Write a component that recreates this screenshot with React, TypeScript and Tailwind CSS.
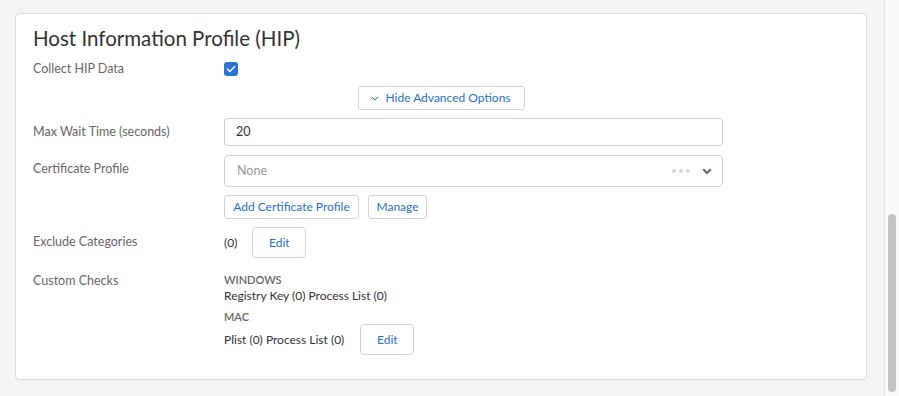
import React from 'react';

const labelCls = 'w-[191px] shrink-0 text-[12.5px] text-[#666]';
const btnCls =
  'h-[24px] rounded-[3px] border border-[#d4d4d4] bg-white text-[12px] text-[#1f6fd1] leading-none whitespace-nowrap';

function Checkbox() {
  return (
    <div className="w-[14px] h-[14px] rounded-[3px] bg-[#2b73d3] flex items-center justify-center">
      <svg width="10" height="8" viewBox="0 0 10 8" fill="none">
        <path d="M1.3 4.1 L3.8 6.5 L8.7 1.4" stroke="white" strokeWidth="1.4" strokeLinecap="round" strokeLinejoin="round" />
      </svg>
    </div>
  );
}

export default function App() {
  return (
    <div className="flex h-[396px] w-[899px] overflow-hidden" style={{ fontFamily: 'Lato, "Open Sans", sans-serif' }}>
      <div className="flex-1 bg-[#f3f4f4] pl-[15px] pt-[13px]">
        <div className="w-[852px] h-[367px] bg-white border border-[#dadada] rounded-[4px] px-[17px] pt-[11px]">
          <h2 className="h-[26px] leading-[26px] text-[20.5px] text-[#333]">Host Information Profile (HIP)</h2>

          <div className="mt-[8px] h-[20px] flex items-center">
            <div className={labelCls}>Collect HIP Data</div>
            <Checkbox />
          </div>

          <div className="mt-[7px] flex justify-center">
            <button className="h-[24px] w-[167px] rounded-[3px] border border-[#d4d4d4] bg-white text-[12px] text-[#1f6fd1] flex items-center justify-center gap-[6px]">
              <svg width="8" height="5" viewBox="0 0 8 5" fill="none">
                <path d="M0.8 0.8 L4 4 L7.2 0.8" stroke="#1f6fd1" strokeWidth="1" />
              </svg>
              Hide Advanced Options
            </button>
          </div>

          <div className="mt-[8px] h-[28px] flex items-center">
            <div className={labelCls}>Max Wait Time (seconds)</div>
            <div className="w-[499px] h-[28px] border border-[#d4d4d4] rounded-[3px] flex items-center px-[11px] text-[12.5px] text-[#333]">
              20
            </div>
          </div>

          <div className="mt-[9px] flex items-start">
            <div className={`${labelCls} pt-[5px] leading-[18px]`}>Certificate Profile</div>
            <div className="w-[499px]">
              <div className="h-[32px] border border-[#d4d4d4] rounded-[4px] flex items-center pl-[12px] pr-[10px] text-[12.5px]">
                <span className="flex-1 text-[#999]">None</span>
                <span className="flex gap-[3px] mr-[12px]">
                  <span className="w-[4px] h-[4px] rounded-full bg-[#d6d6d6]" />
                  <span className="w-[4px] h-[4px] rounded-full bg-[#d6d6d6]" />
                  <span className="w-[4px] h-[4px] rounded-full bg-[#d6d6d6]" />
                </span>
                <svg width="10" height="7" viewBox="0 0 10 7" fill="none">
                  <path d="M1.2 1.3 L5 5 L8.8 1.3" stroke="#666" strokeWidth="2" />
                </svg>
              </div>
              <div className="mt-[8px] flex gap-[9px]">
                <button className={`${btnCls} w-[135px]`}>Add Certificate Profile</button>
                <button className={`${btnCls} w-[59px]`}>Manage</button>
              </div>
            </div>
          </div>

          <div className="mt-[8px] h-[31px] flex items-center">
            <div className={labelCls}>Exclude Categories</div>
            <span className="text-[12px] text-[#333]">(0)</span>
            <button className="ml-[15px] w-[54px] h-[31px] rounded-[4px] border border-[#d4d4d4] bg-white text-[12px] text-[#1f6fd1]">
              Edit
            </button>
          </div>

          <div className="mt-[14px] flex items-start">
            <div className={`${labelCls} leading-[18px]`}>Custom Checks</div>
            <div className="text-[12px] text-[#333]">
              <div className="text-[11px] leading-[16px] font-semibold text-[#666]">WINDOWS</div>
              <div className="leading-[16px]">Registry Key (0) Process List (0)</div>
              <div className="mt-[6px] text-[11px] leading-[14px] font-semibold text-[#666]">MAC</div>
              <div className="h-[31px] flex items-center">
                <span>Plist (0) Process List (0)</span>
                <button className="ml-[16px] w-[54px] h-[31px] rounded-[4px] border border-[#d4d4d4] bg-white text-[12px] text-[#1f6fd1]">
                  Edit
                </button>
              </div>
            </div>
          </div>
        </div>
      </div>
      <div className="w-[15px] bg-[#f9f9f9] border-l border-[#e2e2e2] flex flex-col pt-[214px] pl-[3px]">
        <div className="w-[8px] h-[178px] rounded-full bg-[#c3c3c3]" />
      </div>
    </div>
  );
}
